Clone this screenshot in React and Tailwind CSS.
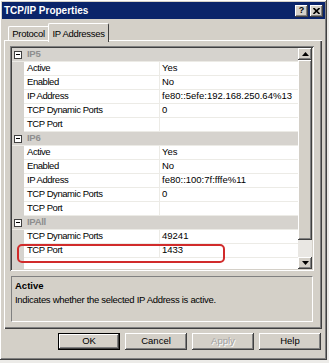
import React from 'react';

const raised =
  'shadow-[inset_-1px_-1px_#404040,inset_1px_1px_#ffffff,inset_-2px_-2px_#808080,inset_2px_2px_#d4d0c8]';

const sections = [
  {
    name: 'IP5',
    rows: [
      ['Active', 'Yes'],
      ['Enabled', 'No'],
      ['IP Address', 'fe80::5efe:192.168.250.64%13'],
      ['TCP Dynamic Ports', '0'],
      ['TCP Port', ''],
    ],
  },
  {
    name: 'IP6',
    rows: [
      ['Active', 'Yes'],
      ['Enabled', 'No'],
      ['IP Address', 'fe80::100:7f:fffe%11'],
      ['TCP Dynamic Ports', '0'],
      ['TCP Port', ''],
    ],
  },
  {
    name: 'IPAll',
    rows: [
      ['TCP Dynamic Ports', '49241'],
      ['TCP Port', '1433'],
    ],
  },
];

const MinusBox = () => (
  <div className="w-[8px] h-[8px] border border-[#404040] bg-white flex items-center justify-center">
    <div className="w-[4px] h-[1px] bg-black" />
  </div>
);

const ScrollArrow = ({ up }) => (
  <div className={`h-[12px] bg-[#d4d0c8] flex items-center justify-center ${raised}`}>
    <svg width="7" height="4" viewBox="0 0 7 4">
      {up ? <path d="M3.5 0 L7 4 L0 4 Z" fill="#000" /> : <path d="M0 0 L7 0 L3.5 4 Z" fill="#000" />}
    </svg>
  </div>
);

const Button = ({ label, isDefault, disabled }) => (
  <div
    className={`w-[62px] h-[17px] bg-[#d4d0c8] flex items-center justify-center text-[9.5px] ${
      isDefault ? 'border border-black' : ''
    } ${raised}`}
  >
    <span className={disabled ? 'text-[#a0a0a0] [text-shadow:1px_1px_#ffffff]' : 'text-black'}>{label}</span>
  </div>
);

const App = () => {
  return (
    <div
      className="w-[329px] h-[363px] bg-[#ecebe8] overflow-hidden"
      style={{ fontFamily: '"Liberation Sans", Arial, sans-serif' }}
    >
      <div className={`w-[327px] h-[360px] bg-[#d4d0c8] p-[2px] flex flex-col ${raised}`}>
        {/* title bar */}
        <div className="h-[17px] bg-[#0a246a] flex items-center justify-between pl-[2px] pr-[2px]">
          <span className="text-white font-bold text-[10px] leading-none">TCP/IP Properties</span>
          <div className="flex gap-[2px]">
            <div className={`w-[13px] h-[12px] bg-[#d4d0c8] flex items-center justify-center text-[9px] font-bold leading-none ${raised}`}>?</div>
            <div className={`w-[13px] h-[12px] bg-[#d4d0c8] flex items-center justify-center ${raised}`}>
              <svg width="7" height="6" viewBox="0 0 7 6">
                <path d="M0.5 0 L6.5 6 M6.5 0 L0.5 6" stroke="#000" strokeWidth="1.6" />
              </svg>
            </div>
          </div>
        </div>

        {/* tabs */}
        <div className="mt-[4px] h-[19px] flex items-end pl-[6px] relative z-10">
          <div className="w-[41px] h-[15px] mb-[1px] border-t border-l border-white border-r-[#404040] border-r flex items-center justify-center text-[9.5px] tracking-[-0.3px] text-black rounded-tl-[2px]">
            Protocol
          </div>
          <div className="w-[61px] h-[19px] -ml-[1px] bg-[#d4d0c8] border-t border-l border-white border-r border-r-[#404040] flex items-start pt-[3px] justify-center text-[9.5px] tracking-[-0.3px] text-black rounded-t-[2px]">
            IP Addresses
          </div>
        </div>

        {/* tab page */}
        <div className="-mt-[2px] ml-[2px] w-[318px] h-[289px] border-t border-l border-white shadow-[inset_-1px_-1px_#404040,inset_-2px_-2px_#808080] pt-[5px] pl-[5px] flex flex-col">
          {/* property grid */}
          <div className="relative w-[304px] h-[225px] p-[2px] bg-white shadow-[inset_1px_1px_#808080,inset_-1px_-1px_#ffffff,inset_2px_2px_#404040,inset_-2px_-2px_#d4d0c8] flex">
            <div className="flex-1 flex flex-col text-[9.5px]">
              {sections.map((s) => (
                <div key={s.name} className="flex flex-col">
                  <div className="h-[14px] flex bg-[#d6d3ce] border-b border-[#ecebe6]">
                    <div className="w-[12px] flex items-center justify-center">
                      <MinusBox />
                    </div>
                    <span className="pl-[3px] flex items-center font-bold text-[#8e8e8e] tracking-[-0.3px]">{s.name}</span>
                  </div>
                  {s.rows.map(([n, v], i) => (
                    <div key={i} className="h-[14px] flex">
                      <div className="w-[12px] bg-[#d6d3ce]" />
                      <div className="w-[136px] pl-[3px] flex items-center border-b border-r border-[#ecebe6] text-black tracking-[-0.45px]">
                        {n}
                      </div>
                      <div className="flex-1 pl-[2px] flex items-center border-b border-[#ecebe6] text-black">
                        {v}
                      </div>
                    </div>
                  ))}
                </div>
              ))}
              <div className="flex-1 flex">
                <div className="w-[12px] bg-[#d6d3ce]" />
              </div>
            </div>
            {/* scrollbar */}
            <div className="w-[14px] flex flex-col bg-[#e9e7e3]">
              <ScrollArrow up />
              <div className={`h-[180px] bg-[#d4d0c8] ${raised}`} />
              <div className="flex-1" />
              <ScrollArrow />
            </div>
            <div className="absolute left-[7px] top-[198px] w-[208px] h-[19px] rounded-[5px] border-2 border-[#d12b2b]" />
          </div>

          {/* description */}
          <div className="mt-[5px] ml-[1px] w-[302px] h-[46px] border border-t-[#808080] border-l-[#808080] border-b-white border-r-white px-[3px] pt-[3px] text-[9.5px] text-black">
            <div className="font-bold leading-[12px]">Active</div>
            <div className="mt-[2px] leading-[12px] tracking-[-0.3px]">Indicates whether the selected IP Address is active.</div>
          </div>
        </div>

        {/* buttons */}
        <div className="mt-[4px] flex justify-end gap-[5px] pr-[4px]">
          <Button label="OK" isDefault />
          <Button label="Cancel" />
          <Button label="Apply" disabled />
          <Button label="Help" />
        </div>
      </div>
    </div>
  );
};

export default App;
